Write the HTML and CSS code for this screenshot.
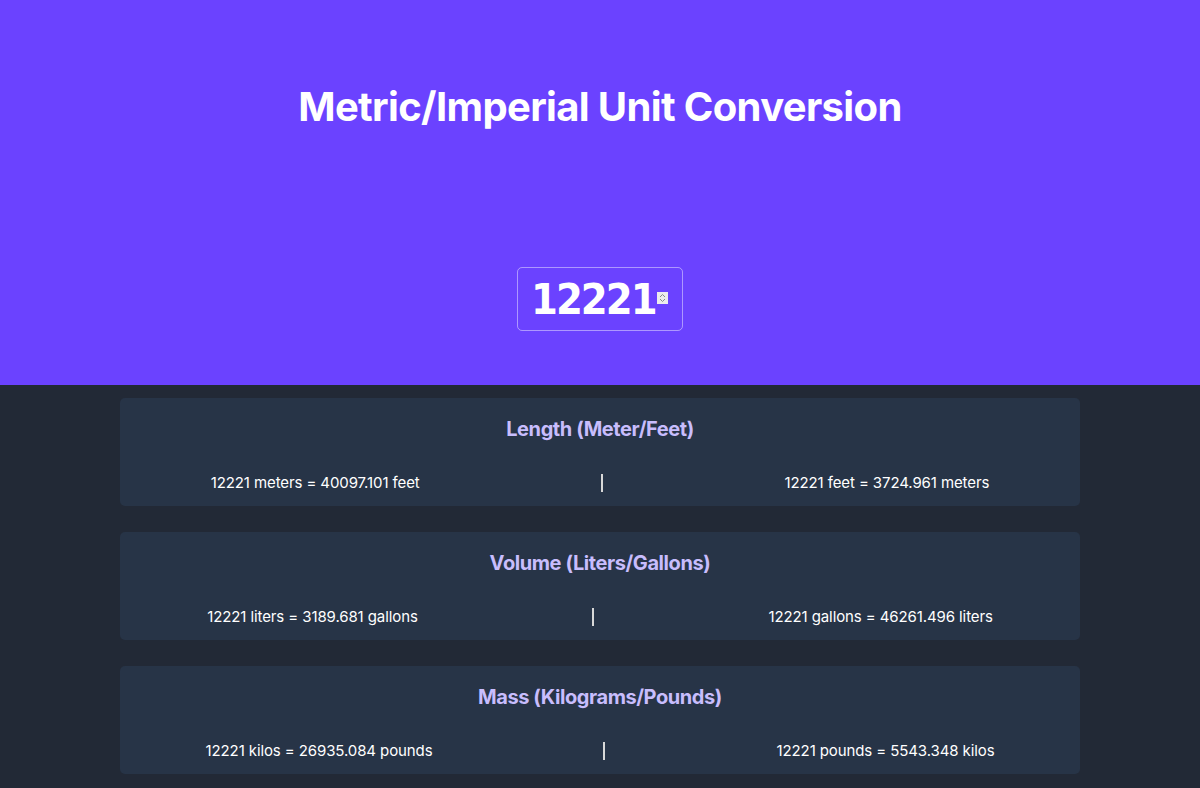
FILE: index.html
```html
<!DOCTYPE html>
<html>
<head>
<meta charset="utf-8">
<link rel="stylesheet" href="styles.css">
</head>
<body>
<header class="hero">
  <h1 class="title">Metric/Imperial Unit Conversion</h1>
  <div class="input-wrap">
    <input class="num-input" type="text" value="12221">
    <span class="spinner"><svg width="7" height="10" viewBox="0 0 7 10"><path d="M1 4 L3.5 1.5 L6 4 M1 6 L3.5 8.5 L6 6" fill="none" stroke="#8a8a8a" stroke-width="1"/></svg></span>
  </div>
</header>
<main class="cards">
  <section class="card">
    <h2 class="card-title">Length (Meter/Feet)</h2>
    <div class="row">
      <p class="res">12221 meters = 40097.101 feet</p>
      <span class="divider"></span>
      <p class="res">12221 feet = 3724.961 meters</p>
    </div>
  </section>
  <section class="card">
    <h2 class="card-title">Volume (Liters/Gallons)</h2>
    <div class="row">
      <p class="res">12221 liters = 3189.681 gallons</p>
      <span class="divider"></span>
      <p class="res">12221 gallons = 46261.496 liters</p>
    </div>
  </section>
  <section class="card">
    <h2 class="card-title">Mass (Kilograms/Pounds)</h2>
    <div class="row">
      <p class="res">12221 kilos = 26935.084 pounds</p>
      <span class="divider"></span>
      <p class="res">12221 pounds = 5543.348 kilos</p>
    </div>
  </section>
</main>
</body>
</html>
```
FILE: styles.css
```css
* { box-sizing: border-box; }
html, body { margin: 0; padding: 0; }
body {
  background: #222936;
  font-family: Inter, "Noto Sans", sans-serif;
  color: #ffffff;
}
.hero {
  background: #6b42ff;
  height: 385px;
  display: flex;
  flex-direction: column;
  align-items: center;
  padding-top: 83px;
}
.title {
  margin: 0;
  font-size: 40px;
  line-height: 48px;
  font-weight: 700;
  letter-spacing: -0.65px;
  color: #ffffff;
}
.input-wrap {
  position: relative;
  margin-top: 136px;
}
.num-input {
  display: block;
  width: 166px;
  height: 64px;
  background: transparent;
  border: 1px solid rgba(255,255,255,0.45);
  border-radius: 5px;
  color: #ffffff;
  font-family: "DejaVu Sans Condensed", "DejaVu Sans", sans-serif;
  font-stretch: condensed;
  font-weight: 700;
  font-size: 43px;
  letter-spacing: -2px;
  padding: 0 0 0 13px;
  outline: none;
}
.spinner {
  position: absolute;
  left: 140px;
  top: 25px;
  width: 11px;
  height: 12px;
  background: #ececec;
  display: flex;
  align-items: center;
  justify-content: center;
}
.cards {
  width: 960px;
  margin: 13px auto 0;
  display: flex;
  flex-direction: column;
  gap: 26px;
}
.card {
  background: #273447;
  border-radius: 5px;
  height: 108px;
  padding-top: 17px;
}
.card-title {
  margin: 0;
  text-align: center;
  font-size: 20px;
  line-height: 28px;
  font-weight: 700;
  letter-spacing: -0.42px;
  color: #c8bdfd;
}
.row {
  display: flex;
  justify-content: space-around;
  align-items: center;
  margin-top: 30px;
}
.res {
  margin: 0;
  font-size: 15px;
  line-height: 20px;
  letter-spacing: -0.1px;
  color: #ffffff;
}
.divider {
  width: 2px;
  height: 18px;
  background: #d8d8d8;
}
```
